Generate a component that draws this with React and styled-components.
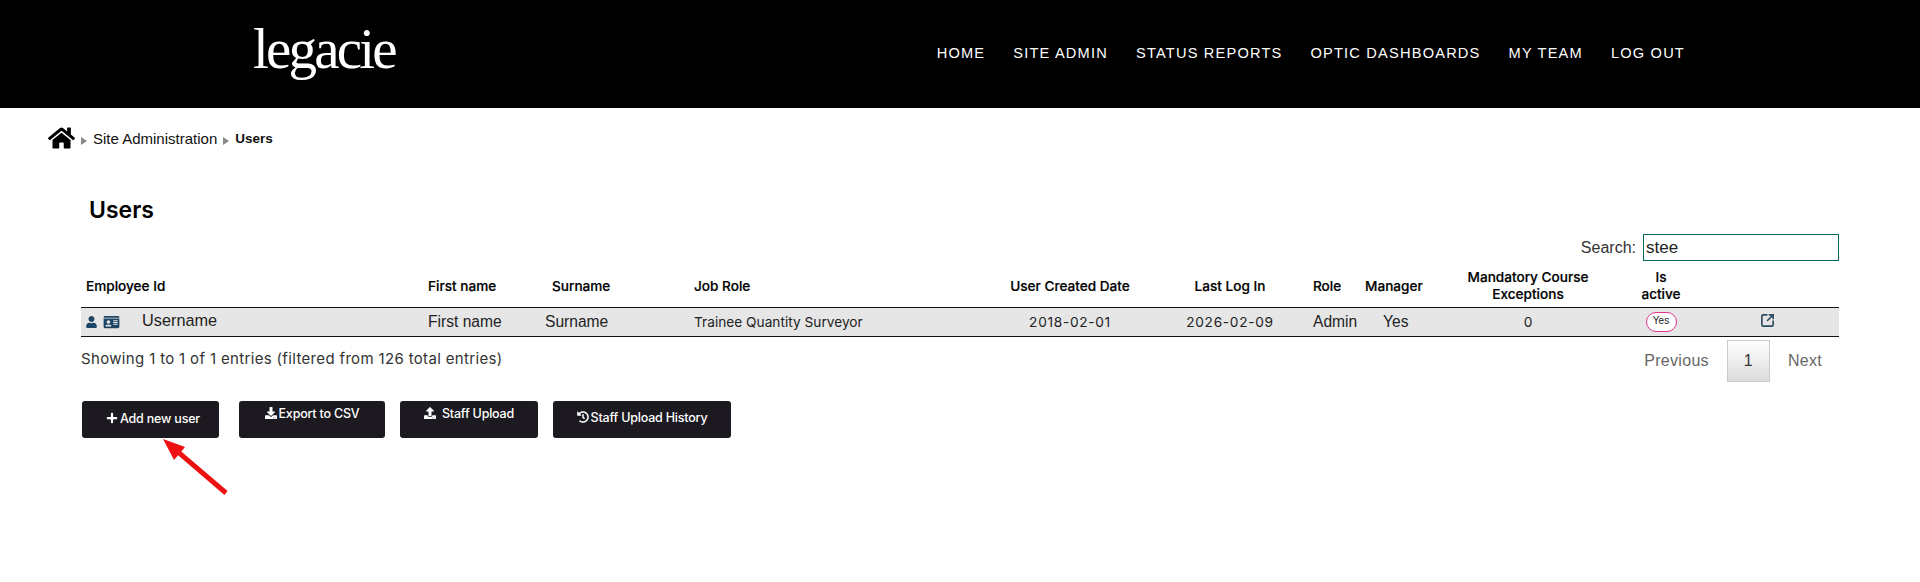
import React from "react";
import styled, { createGlobalStyle } from "styled-components";
import { FaHome, FaUser, FaIdCard, FaPlus, FaDownload, FaUpload, FaHistory } from "react-icons/fa";
import { SquareArrowOutUpRight } from "lucide-react";

const GlobalStyle = createGlobalStyle`
  html, body {
    margin: 0;
    padding: 0;
    background: #fff;
    font-family: "Inter", "Liberation Sans", sans-serif;
    color: #111;
  }
  * { box-sizing: border-box; }
`;

const Page = styled.div`
  min-height: 582px;
  background: #fff;
`;

const TopBar = styled.header`
  height: 108px;
  background: #000;
  display: flex;
  align-items: flex-start;
  justify-content: space-between;
  padding: 0 235px 0 253px;
`;

const Logo = styled.div`
  font-family: "Liberation Serif", serif;
  font-size: 57px;
  line-height: 57px;
  letter-spacing: -2.8px;
  color: #fff;
  margin-top: 20px;
`;

const Nav = styled.nav`
  display: flex;
  gap: 28px;
  margin-top: 44px;
`;

const NavLink = styled.a`
  font-family: "Liberation Sans", sans-serif;
  font-size: 14.6px;
  line-height: 18px;
  letter-spacing: 1.2px;
  color: #fff;
  text-transform: uppercase;
`;

const Crumbs = styled.div`
  display: flex;
  align-items: center;
  height: 24px;
  margin: 18px 0 0 48px;
  font-family: "Liberation Sans", sans-serif;
  font-size: 15px;
  color: #111;
`;

const HomeIcon = styled(FaHome)`
  width: 27px;
  height: 24px;
  color: #000;
`;

const Arrow = styled.span`
  width: 0;
  height: 0;
  margin: 5px 6px 0 6px;
  border-left: 6px solid #888;
  border-top: 4px solid transparent;
  border-bottom: 4px solid transparent;
`;

const CurrentCrumb = styled.span`
  font-weight: 700;
  font-size: 13.5px;
`;

const Main = styled.main`
  padding: 0 81px;
`;

const Title = styled.h1`
  margin: 45px 0 0 8px;
  font-size: 23px;
  line-height: 30px;
  font-weight: 600;
  color: #000;
`;

const SearchRow = styled.div`
  display: flex;
  justify-content: flex-end;
  align-items: center;
  gap: 7px;
  margin-top: 9px;
  font-family: "Liberation Sans", sans-serif;
  font-size: 16px;
  color: #333;
`;

const SearchInput = styled.input`
  width: 196px;
  height: 27px;
  padding: 0 2px;
  border: 1px solid #00695c;
  outline: none;
  font-family: "Liberation Sans", sans-serif;
  font-size: 17px;
  color: #222;
`;

const Table = styled.table`
  width: 100%;
  table-layout: fixed;
  border-collapse: collapse;
`;

const Th = styled.th`
  height: 46px;
  padding: 5px 0 0 ${(p) => p.$pad || 0}px;
  border-bottom: 1px solid #111;
  font-size: 13.6px;
  line-height: 17px;
  font-weight: 500;
  color: #000;
  text-align: ${(p) => p.$align || "left"};
  vertical-align: middle;
  -webkit-text-stroke: 0.2px #000;
`;

const Td = styled.td`
  height: 29px;
  padding: 0 0 0 ${(p) => p.$pad || 0}px;
  background: #e6e6e6;
  border-bottom: 1px solid #111;
  font-family: ${(p) => (p.$plain ? '"Liberation Sans", sans-serif' : '"Inter", sans-serif')};
  font-size: ${(p) => (p.$plain ? 15.6 : 13.7)}px;
  letter-spacing: ${(p) => p.$spread || 0}px;
  color: #222;
  text-align: ${(p) => p.$align || "left"};
  white-space: nowrap;
`;

const UserCell = styled.div`
  display: flex;
  align-items: center;
  font-family: "Liberation Sans", sans-serif;
  font-size: 16.3px;
`;

const UserName = styled.span`
  margin-top: -2px;
`;

const UserIcon = styled(FaUser)`
  width: 11px;
  height: 12px;
  color: #1c4464;
`;

const CardIcon = styled(FaIdCard)`
  width: 17px;
  height: 14px;
  margin: 0 22px 0 6px;
  color: #1c4464;
`;

const Pill = styled.span`
  display: inline-block;
  width: 31px;
  height: 20px;
  border: 1px solid #e0368c;
  border-radius: 10px;
  background: #fff;
  font-family: "Liberation Sans", sans-serif;
  font-size: 10px;
  line-height: 16px;
  text-align: center;
  color: #222;
`;

const LinkIcon = styled(SquareArrowOutUpRight)`
  width: 15px;
  height: 15px;
  color: #2a4a62;
  stroke-width: 2.6;
  vertical-align: -1px;
`;

const FooterRow = styled.div`
  display: flex;
  justify-content: space-between;
  align-items: flex-start;
  padding-top: 3px;
`;

const Info = styled.div`
  margin-top: 9px;
  font-size: 15px;
  line-height: 20px;
  letter-spacing: 0.34px;
  color: #333;
`;

const Pager = styled.div`
  display: flex;
  align-items: center;
  font-family: "Liberation Sans", sans-serif;
  font-size: 16px;
  letter-spacing: 0.3px;
  color: #666;
`;

const PagerLink = styled.span`
  padding: 0 ${(p) => p.$right}px 0 ${(p) => p.$left}px;
`;

const PageBox = styled.span`
  width: 43px;
  height: 42px;
  display: flex;
  align-items: center;
  justify-content: center;
  border: 1px solid #cacaca;
  background: linear-gradient(#fff, #dcdcdc);
  color: #333;
`;

const ButtonRow = styled.div`
  position: relative;
  display: flex;
  margin: 19px 0 0 1px;
`;

const Button = styled.button`
  width: ${(p) => p.$w}px;
  height: 37px;
  margin-right: ${(p) => p.$gap || 0}px;
  padding: ${(p) => p.$top}px 0 0 ${(p) => p.$shift || 0}px;
  display: flex;
  align-items: flex-start;
  justify-content: center;
  gap: ${(p) => p.$iconGap || 2}px;
  border: none;
  border-radius: 3px;
  background: #1c1a20;
  color: #fff;
  font-family: "Inter", sans-serif;
  font-size: 12.5px;
  line-height: 16px;
  font-weight: 500;
  letter-spacing: -0.2px;

  svg {
    width: 12px;
    height: 12px;
    margin-top: 1px;
  }
`;

const PointerMark = styled.div`
  position: absolute;
  left: 81px;
  top: 38px;
  width: 66px;
  height: 57px;

  svg {
    display: block;
  }
`;

const columns = [342, 117, 149, 281, 200, 120, 70, 70, 196, 70, 143];

export default function App() {
  return (
    <Page>
      <GlobalStyle />
      <TopBar>
        <Logo>legacie</Logo>
        <Nav>
          <NavLink>Home</NavLink>
          <NavLink>Site Admin</NavLink>
          <NavLink>Status Reports</NavLink>
          <NavLink>Optic Dashboards</NavLink>
          <NavLink>My Team</NavLink>
          <NavLink>Log Out</NavLink>
        </Nav>
      </TopBar>
      <Crumbs>
        <HomeIcon />
        <Arrow />
        <span>Site Administration</span>
        <Arrow />
        <CurrentCrumb>Users</CurrentCrumb>
      </Crumbs>
      <Main>
        <Title>Users</Title>
        <SearchRow>
          <span>Search:</span>
          <SearchInput defaultValue="stee" />
        </SearchRow>
        <Table>
          <colgroup>
            {columns.map((w, i) => (
              <col key={i} style={{ width: w }} />
            ))}
          </colgroup>
          <thead>
            <tr>
              <Th $pad={5}>Employee Id</Th>
              <Th $pad={5}>First name</Th>
              <Th $pad={12}>Surname</Th>
              <Th $pad={5}>Job Role</Th>
              <Th $align="center">User Created Date</Th>
              <Th $align="center">Last Log In</Th>
              <Th $pad={23}>Role</Th>
              <Th $pad={5}>Manager</Th>
              <Th $align="center">Mandatory Course<br />Exceptions</Th>
              <Th $align="center">Is<br />active</Th>
              <Th />
            </tr>
          </thead>
          <tbody>
            <tr>
              <Td $pad={5}>
                <UserCell>
                  <UserIcon />
                  <CardIcon />
                  <UserName>Username</UserName>
                </UserCell>
              </Td>
              <Td $pad={5} $plain>First name</Td>
              <Td $pad={5} $plain>Surname</Td>
              <Td $pad={5}>Trainee Quantity Surveyor</Td>
              <Td $align="center" $spread={0.7}>2018-02-01</Td>
              <Td $align="center" $spread={0.7}>2026-02-09</Td>
              <Td $pad={23} $plain>Admin</Td>
              <Td $pad={23} $plain>Yes</Td>
              <Td $align="center">0</Td>
              <Td $align="center"><Pill>Yes</Pill></Td>
              <Td $align="center"><LinkIcon /></Td>
            </tr>
          </tbody>
        </Table>
        <FooterRow>
          <Info>Showing 1 to 1 of 1 entries (filtered from 126 total entries)</Info>
          <Pager>
            <PagerLink $left={0} $right={18}>Previous</PagerLink>
            <PageBox>1</PageBox>
            <PagerLink $left={18} $right={17}>Next</PagerLink>
          </Pager>
        </FooterRow>
        <ButtonRow>
          <Button $w={137} $gap={20} $top={10} $shift={5}><FaPlus />Add new user</Button>
          <Button $w={146} $gap={15} $top={5}><FaDownload />Export to CSV</Button>
          <Button $w={138} $gap={15} $top={5} $iconGap={6}><FaUpload />Staff Upload</Button>
          <Button $w={178} $top={9}><FaHistory />Staff Upload History</Button>
          <PointerMark>
            <svg width="66" height="57" viewBox="0 0 66 57">
              <path d="M0 0 L22 8 L18.3 12.4 L64.6 52.1 L61.4 55.9 L15.1 16.2 L11 21 Z" fill="#ee1111" />
            </svg>
          </PointerMark>
        </ButtonRow>
      </Main>
    </Page>
  );
}
